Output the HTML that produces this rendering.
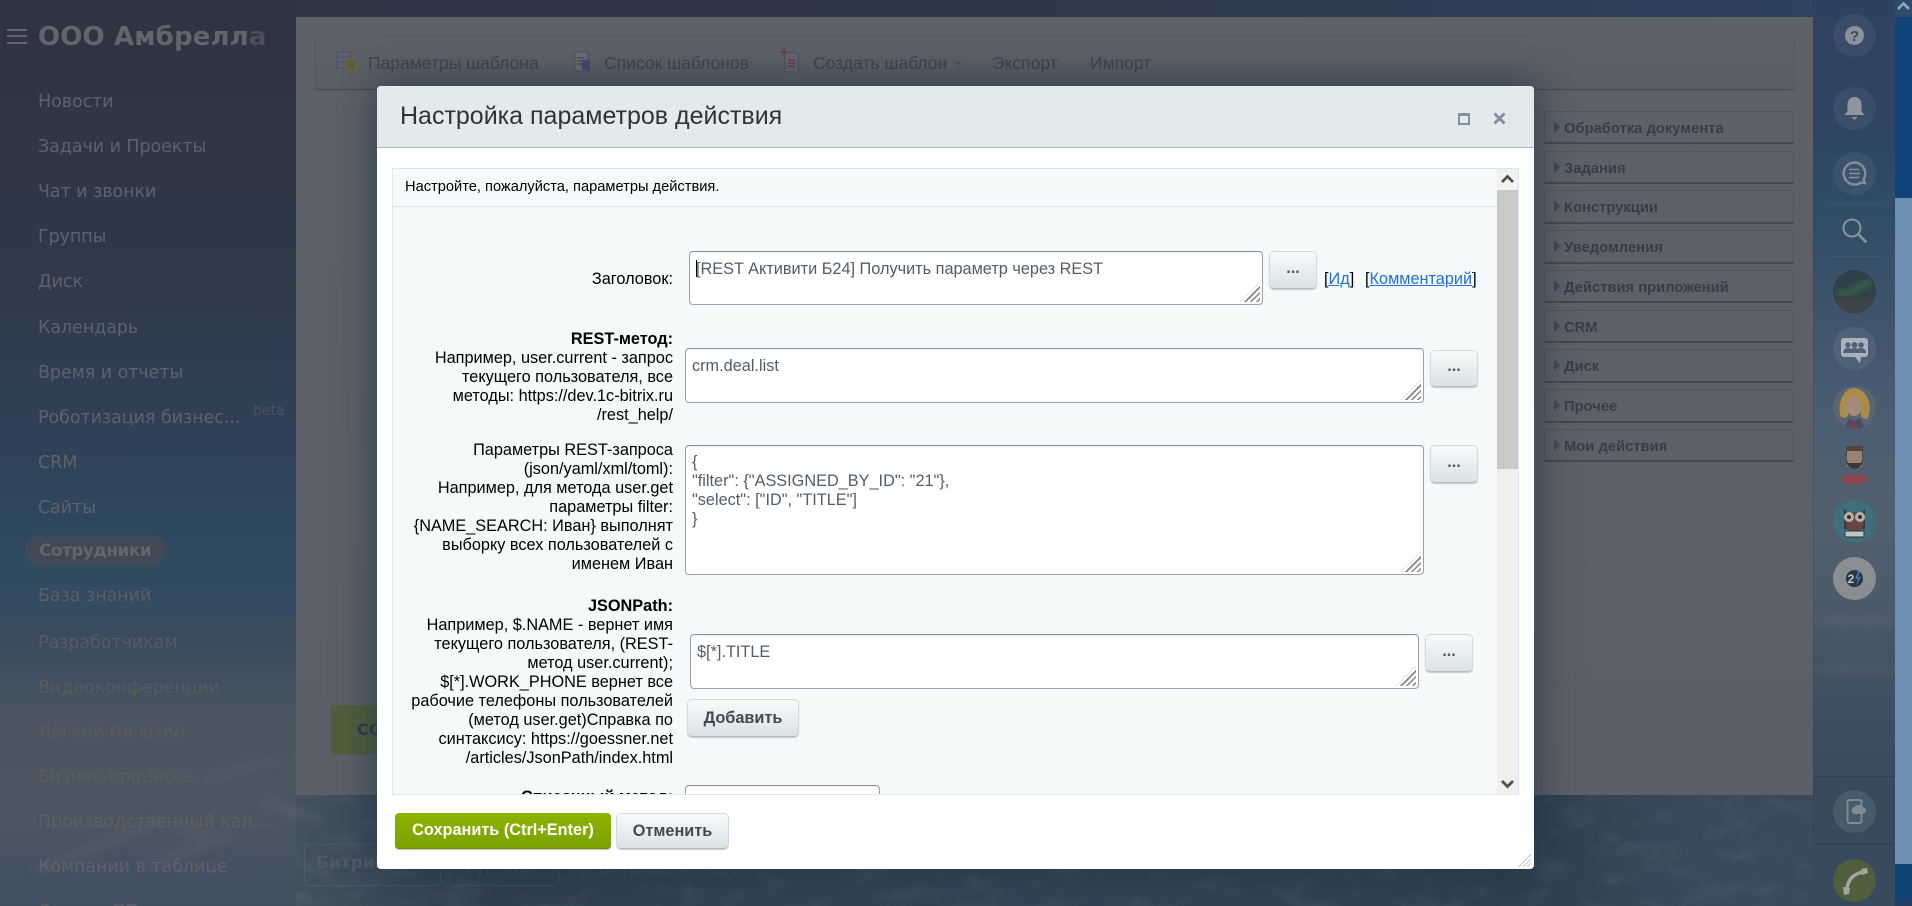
<!DOCTYPE html>
<html lang="ru"><head><meta charset="utf-8"><title>Настройка параметров действия</title>
<style>
html,body{margin:0;padding:0;width:1912px;height:906px;overflow:hidden;background:#33445a}
*{box-sizing:border-box}
body{font-family:"Liberation Sans",Arial,sans-serif;position:relative}
.a{position:absolute}
.t{position:absolute;white-space:nowrap}
.nav{position:absolute;left:38px;white-space:nowrap;font-family:"DejaVu Sans",sans-serif;font-size:17.4px;line-height:24px;height:24px}
.pi{position:absolute;left:1544px;width:250px;height:33px;border:1px solid rgba(60,65,75,.35);border-bottom:2px solid rgba(50,55,65,.55);font:bold 14.75px/34px "Liberation Sans",sans-serif;color:#383d4c;padding-left:19px;border-radius:1px}
.pi:before{content:"";position:absolute;left:9px;top:9px;border-left:6px solid #444a57;border-top:6px solid transparent;border-bottom:6px solid transparent}
.c{position:absolute;left:1833px;width:43px;height:43px;border-radius:50%;background:rgba(255,255,255,.055)}
.c svg,.av svg{position:absolute;left:0;top:0}
.av{position:absolute;left:1833px;width:43px;height:43px;border-radius:50%;overflow:hidden}
.lab{position:absolute;left:373px;width:300px;text-align:right;font-size:16.3px;line-height:19px;color:#000;white-space:nowrap}
.ta{position:absolute;background:#fff;border:1px solid #9aa1ad;border-top-color:#8a92a0;border-radius:4px;box-shadow:inset 0 1px 1px rgba(0,0,0,.06);font-size:16.3px;line-height:19px;color:#535c69;padding:4px 6px;white-space:pre}
.ta:after{content:"";position:absolute;right:2px;bottom:2px;width:20px;height:20px;background:repeating-linear-gradient(135deg,#858585 0 1.6px,transparent 1.6px 4.2px);clip-path:polygon(100% 0,100% 100%,0 100%)}
.btn{position:absolute;border-radius:5px;background:linear-gradient(#f6fafa,#dbe3e5);border:1px solid #d3dadd;border-bottom-color:#b5bdc2;box-shadow:0 1px 1px rgba(0,0,0,.2);text-align:center;font-weight:bold;font-size:16.3px;color:#535c69}
a{color:#2472d8;text-decoration:underline}
</style></head><body>

<!-- backdrop -->
<div class="a" style="left:0;top:0;width:1912px;height:906px;background:linear-gradient(90deg,#2f3545 0,#2f3849 1000px,#2f4360 1895px)"></div>
<div class="a" style="left:0;top:0;width:296px;height:906px;background:linear-gradient(180deg,#2f3443 0,#2f3645 150px,#2f3a4c 300px,#2f4258 450px,#2f4a60 560px,#3a4c5e 640px,#4a5561 720px,#4b5663 820px,#414f5f 906px)"></div>
<div class="a" style="left:1813px;top:0;width:82px;height:906px;background:linear-gradient(180deg,#2f4160 0,#2f4562 130px,#304c66 210px,#3f546a 310px,#4d5e72 430px,#52606e 520px,#4a5868 620px,#3e5062 700px,#384a5c 790px,#384b5c 906px);border-left:1px solid rgba(40,50,65,.25)"></div>
<div class="a" style="left:296px;top:795px;width:1517px;height:111px;background:linear-gradient(90deg,#44525f 0,#3c4a58 80px,#303f4e 180px,#334556 700px,#2f4050 1240px,#384a5c 1400px,#384a5c 100%)"></div>

<!-- clouds -->
<svg class="a" style="left:0;top:0" width="1912" height="906">
<defs>
<filter id="b1" x="-30%" y="-100%" width="160%" height="300%"><feGaussianBlur stdDeviation="5"/></filter>
<filter id="cl" x="0" y="0" width="100%" height="100%"><feTurbulence type="fractalNoise" baseFrequency=".025 .05" numOctaves="4" seed="8"/><feColorMatrix values="0 0 0 0 .55  0 0 0 0 .58  0 0 0 0 .62  1.8 0 0 0 -.82"/></filter>
</defs>
<g filter="url(#b1)" fill="#6a7079" opacity=".3">
<ellipse cx="100" cy="845" rx="75" ry="5" transform="rotate(-22 100 845)"/>
<ellipse cx="190" cy="850" rx="50" ry="5" transform="rotate(-20 190 850)"/>
<ellipse cx="200" cy="835" rx="30" ry="5" transform="rotate(18 200 835)"/>
<ellipse cx="290" cy="810" rx="35" ry="6" transform="rotate(18 290 810)"/>
<ellipse cx="240" cy="770" rx="45" ry="4" transform="rotate(-15 240 770)"/>
<ellipse cx="1855" cy="620" rx="45" ry="7"/>
<ellipse cx="1855" cy="670" rx="45" ry="5"/>
</g>
<rect x="296" y="795" width="1517" height="111" filter="url(#cl)" opacity=".1"/>
</svg>

<!-- sidebar -->
<div class="a" style="left:7px;top:29px;width:20px;height:2px;background:#62656e;box-shadow:0 6px 0 #62656e,0 13px 0 #62656e"></div>
<div class="t" style="left:38px;top:19px;font:bold 26px/36px 'DejaVu Sans',sans-serif;letter-spacing:.15px;color:#62656e">ООО Амбрелл<span style="color:#4b4f5b">а</span></div>
<div class="nav" style="top:90px;color:#5e616b">Новости</div>
<div class="nav" style="top:135px;color:#5e616b">Задачи и Проекты</div>
<div class="nav" style="top:180px;color:#5e616b">Чат и звонки</div>
<div class="nav" style="top:225px;color:#5e616b">Группы</div>
<div class="nav" style="top:270px;color:#5e616b">Диск</div>
<div class="nav" style="top:316px;color:#5e616b">Календарь</div>
<div class="nav" style="top:361px;color:#5e616b">Время и отчеты</div>
<div class="nav" style="top:406px;color:#5e616b">Роботизация бизнес...</div>
<div class="t" style="left:253px;top:402px;font:14px/18px 'DejaVu Sans',sans-serif;color:#4a5264">beta</div>
<div class="nav" style="top:451px;color:#5e616b">CRM</div>
<div class="nav" style="top:496px;color:#5e616b">Сайты</div>
<div class="a" style="left:25px;top:535px;width:141px;height:31px;border-radius:16px;background:#3f4a56"></div>
<div class="nav" style="top:539px;left:39px;font-size:17px;color:#62656c;font-weight:bold;letter-spacing:-.6px">Сотрудники</div>
<div class="nav" style="top:584px;color:#5a5e67">База знаний</div>
<div class="nav" style="top:631px;color:#595b63">Разработчикам</div>
<div class="nav" style="top:676px;color:#585a60">Видеоконференции</div>
<div class="nav" style="top:720px;color:#595a5f">Легкий магазин</div>
<div class="nav" style="top:765px;color:#5a5c62">Бизнес-процессы</div>
<div class="nav" style="top:810px;color:#5e6067">Производственный кал...</div>
<div class="nav" style="top:855px;color:#5f6269">Компании в таблице</div>
<div class="nav" style="top:900px;color:#5a5e67">Отчеты ПП</div>

<!-- footer of page behind dialog -->
<div class="a" style="left:304px;top:844px;width:137px;height:42px;border:1px solid rgba(110,120,130,.3);border-radius:5px"></div>
<div class="a" style="left:449px;top:844px;width:110px;height:42px;border:1px solid rgba(110,120,130,.25);border-radius:5px"></div>
<div class="t" style="left:316px;top:852px;font:bold 17px/22px 'DejaVu Sans',sans-serif;color:#535a64">Битрикс24</div>
<div class="t" style="left:466px;top:858px;font:16px/22px 'DejaVu Sans',sans-serif;color:#3f4e5d">Русский</div>
<div class="t" style="left:578px;top:858px;font:16px/22px 'DejaVu Sans',sans-serif;color:#3f4e5d">© Битрикс24, 2021</div>

<!-- main panel -->
<div class="a" style="left:296px;top:17px;width:1517px;height:778px;background:linear-gradient(#5f6169,#5c5f68)"></div>
<div class="a" style="left:316px;top:37px;width:1478px;height:52px;border-radius:3px;background:linear-gradient(#5f6168,#5a5e66);box-shadow:0 1px 1px rgba(40,45,55,.5),0 0 1px rgba(40,45,55,.35)"></div>
<svg class="a" style="left:336px;top:50px" width="22" height="24"><rect x="1" y="2" width="14" height="16" fill="#5f6371" stroke="#4c5268"/><path d="M1 7h14M1 12h14" stroke="#4c5268"/><circle cx="15" cy="15" r="5.5" fill="#5d5c3a" stroke="#66653a" stroke-width="2"/></svg>
<div class="t" style="left:368px;top:52px;font-size:17.5px;line-height:22px;color:#3f4350">Параметры шаблона</div>
<svg class="a" style="left:572px;top:50px" width="20" height="24"><rect x="3" y="2" width="13" height="19" fill="#6a6c75" stroke="#4c5060"/><path d="M5 8h7M5 11h7M5 14h7" stroke="#6c4042" stroke-width="1.5"/><rect x="10" y="10" width="8" height="10" fill="#414a70"/></svg>
<div class="t" style="left:604px;top:52px;font-size:17.5px;line-height:22px;color:#3f4350">Список шаблонов</div>
<svg class="a" style="left:778px;top:46px" width="22" height="28"><path d="M6 2v8M2 6h8" stroke="#74383a" stroke-width="1.5"/><rect x="7" y="7" width="13" height="19" fill="#646670" stroke="#4c5060"/><path d="M10 14h7M10 17h7M10 20h7" stroke="#74383a" stroke-width="1.5"/></svg>
<div class="t" style="left:813px;top:52px;font-size:17.5px;line-height:22px;color:#3f4350">Создать шаблон</div>
<div class="a" style="left:954px;top:62px;border-top:3px solid #4c505c;border-left:4px solid transparent;border-right:4px solid transparent"></div>
<div class="t" style="left:992px;top:52px;font-size:17.5px;line-height:22px;color:#3f4350">Экспорт</div>
<div class="t" style="left:1090px;top:52px;font-size:17.5px;line-height:22px;color:#3f4350">Импорт</div>

<div class="pi" style="top:111px">Обработка документа</div>
<div class="pi" style="top:151px">Задания</div>
<div class="pi" style="top:190px;height:34px">Конструкции</div>
<div class="pi" style="top:230px;height:34px">Уведомления</div>
<div class="pi" style="top:270px">Действия приложений</div>
<div class="pi" style="top:310px">CRM</div>
<div class="pi" style="top:349px;height:34px">Диск</div>
<div class="pi" style="top:389px;height:34px">Прочее</div>
<div class="pi" style="top:429px;height:33px">Мои действия</div>

<div class="a" style="left:1586px;top:525px;width:35px;height:10px;background:#62625f;opacity:.4"></div>
<div class="a" style="left:1586px;top:540px;width:35px;height:10px;background:#62625f;opacity:.4"></div>
<div class="a" style="left:1586px;top:556px;width:170px;height:12px;background:#636361;opacity:.35"></div>
<div class="a" style="left:1586px;top:572px;width:125px;height:10px;background:#636361;opacity:.35"></div>
<div class="a" style="left:1586px;top:600px;width:205px;height:10px;background:#636361;opacity:.3"></div>
<div class="a" style="left:1586px;top:618px;width:90px;height:14px;background:#636361;opacity:.3"></div>
<div class="a" style="left:1544px;top:687px;width:250px;height:1px;border-top:1px dotted #565a5e"></div>

<div class="a" style="left:331px;top:705px;width:60px;height:49px;background:#505f3c;border-radius:2px"></div>
<div class="t" style="left:357px;top:718px;font:bold 16px/24px 'DejaVu Sans',sans-serif;color:#2f3a4c">СО</div>

<!-- right column -->
<div class="a" style="left:1828px;top:204px;width:55px;height:1px;background:rgba(255,255,255,.05)"></div>
<div class="a" style="left:1828px;top:256px;width:55px;height:1px;background:rgba(255,255,255,.05)"></div>
<div class="a" style="left:1814px;top:776px;width:81px;height:1px;background:rgba(20,30,45,.18)"></div>
<div class="a" style="left:1814px;top:843px;width:81px;height:1px;background:rgba(20,30,45,.18)"></div>

<div class="c" style="top:14px"><svg width="43" height="43"><circle cx="21.5" cy="21.5" r="9.5" fill="#8b909a"/><text x="21.5" y="27" text-anchor="middle" font-family="Liberation Sans" font-weight="bold" font-size="15" fill="#3c4a62">?</text></svg></div>
<div class="c" style="top:87px"><svg width="43" height="43"><path d="M21.5 10c-5 0-7 4-7 8v6l-3 4h20l-3-4v-6c0-4-2-8-7-8z" fill="#8f949d"/><path d="M18.5 30h6l-3 3z" fill="#8f949d"/></svg></div>
<div class="c" style="top:152px"><svg width="43" height="43"><path d="M21.5 10.5a11 11 0 1 0 6.5 20l4 .5-1.500-3.500a11 11 0 0 0-9-17z" fill="none" stroke="#868d98" stroke-width="2.400"/><path d="M16 17.500h10M16 21.500h11M16 25.500h10" stroke="#868d98" stroke-width="1.500"/></svg></div>
<svg class="a" style="left:1840px;top:216px" width="30" height="30"><circle cx="12" cy="12" r="8.500" fill="none" stroke="#8b929c" stroke-width="2"/><path d="M18 18l8.500 8.500" stroke="#8b929c" stroke-width="2.600"/></svg>

<div class="av" style="top:270px;background:#33424a"><svg width="43" height="43"><defs><filter id="g"><feGaussianBlur stdDeviation="3"/></filter></defs><rect width="43" height="43" fill="#2f4049"/><rect y="27" width="43" height="16" fill="#3d4448"/><path d="M3 24C14 26 26 18 38 10" stroke="#35644a" stroke-width="6" fill="none" filter="url(#g)"/></svg></div>
<div class="av" style="top:327px;background:#4f6279"><svg width="43" height="43"><path d="M11 11h21a3 3 0 0 1 3 3v13a3 3 0 0 1-3 3h-4l-1 6-5-6H11a3 3 0 0 1-3-3V14a3 3 0 0 1 3-3z" fill="#adb1b8"/><circle cx="15" cy="18" r="2.800" fill="#4f6279"/><circle cx="28" cy="18" r="2.800" fill="#4f6279"/><circle cx="21.500" cy="18" r="3" fill="#4f6279"/><path d="M10 26c0-4 3-5 5-5s5 1 5 5zM23 26c0-4 3-5 5-5s5 1 5 5zM16 26c0-4 3-5 5.500-5s5.500 1 5.500 5z" fill="#4f6279"/></svg></div>
<div class="av" style="top:386px;background:#5b6470"><svg width="43" height="43"><path d="M8 32C3 16 12 2 21 2s20 12 14 30c-2 2-6 0-7-2l-1-14c-5 0-9-1-11-3l-1 16c-1 3-5 4-7 1z" fill="#a98c48"/><ellipse cx="21" cy="20" rx="8" ry="10" fill="#a58a7a"/><path d="M11 43l5-11 5 3 6-3 5 11z" fill="#484d6a"/><path d="M20 35l3 0 1 8h-5z" fill="#8a3a46"/></svg></div>
<div class="av" style="top:442px;background:transparent"><svg width="43" height="43"><path d="M13 4h17v10H13z" fill="#4e4540"/><rect x="14" y="9" width="15" height="16" fill="#9a8270"/><path d="M13 17c0 13 17 13 17 0l-2 4H15z" fill="#3d3735"/><path d="M4 43c2-8 10-11 18-11s16 3 18 11z" fill="#8a4650"/></svg></div>
<div class="av" style="top:500px;background:#3f6e7c"><svg width="43" height="43"><path d="M11 9l4 4h13l4-4v20H11z" fill="#383a42"/><ellipse cx="21.500" cy="22" rx="9" ry="10" fill="#6d4342"/><circle cx="16" cy="17" r="5" fill="#b2b3b0"/><circle cx="27" cy="17" r="5" fill="#b2b3b0"/><circle cx="16" cy="17" r="2" fill="#333"/><circle cx="27" cy="17" r="2" fill="#333"/><rect x="12" y="31" width="19" height="6" rx="1" fill="#bcc4c4" stroke="#333"/></svg></div>
<div class="av" style="top:557px;background:#8a8d92"><svg width="43" height="43"><circle cx="21.500" cy="21.500" r="8.500" fill="#2a3644"/><text x="18" y="26" text-anchor="middle" font-family="Liberation Sans" font-weight="bold" font-size="12" fill="#bfc3c8">2</text><path d="M25 14l-3 8h3l-2 7 5-9h-3l2-6z" fill="#2f7ea0"/></svg></div>
<div class="av" style="top:790px;background:#475c6a"><svg width="43" height="43"><rect x="14.500" y="10" width="14" height="23" rx="2" fill="none" stroke="#7f8a92" stroke-width="2"/><path d="M22 24a3.500 3.500 0 0 1 0-7c1-3 6-3 7 0a3.500 3.500 0 0 1 1 7z" fill="#7f8a92"/></svg></div>
<div class="av" style="top:859px;left:1833px;background:#4f5f3d"><svg width="43" height="43"><path d="M14 31C14 21 21 14 31 13" fill="none" stroke="#a3a69f" stroke-width="3.500"/><path d="M10 28l7 1-1 6-5 1zM28 10l6-1 1 5-6 2z" fill="#a3a69f"/></svg></div>

<!-- right strip -->
<div class="a" style="left:1895px;top:0;width:17px;height:906px;background:#6e8fb4"></div>
<div class="a" style="left:1895px;top:0;width:17px;height:17px;background:#2e4a6c"></div>
<div class="a" style="left:1895px;top:17px;width:17px;height:181px;background:#0f4379"></div>
<div class="a" style="left:1895px;top:864px;width:17px;height:35px;background:#0e4175"></div>
<div class="a" style="left:1895px;top:899px;width:17px;height:7px;background:#223f63"></div>
<svg class="a" style="left:1895px;top:0" width="17" height="17"><path d="M3 9l5.500-5.500L14 9" stroke="#93a7bd" stroke-width="2.600" fill="none"/></svg>

<!-- dialog -->
<div class="a" style="left:377px;top:86px;width:1157px;height:783px;background:#fff;border-radius:4px;box-shadow:0 0 38px 6px rgba(25,50,65,.55)"></div>
<div class="a" style="left:377px;top:86px;width:1157px;height:62px;background:#e3eaec;border-radius:4px 4px 0 0;border-bottom:1px solid #b4b8ba"></div>
<div class="t" style="left:400px;top:101px;font-size:25px;line-height:30px;color:#2f3338">Настройка параметров действия</div>
<div class="a" style="left:1458px;top:113px;width:12px;height:12px;border:2px solid #838fa2;border-top-width:3px"></div>
<svg class="a" style="left:1493px;top:112px" width="13" height="13"><path d="M1.500 1.500l10 10M11.500 1.500l-10 10" stroke="#7f8ba0" stroke-width="2.800"/></svg>

<!-- content box -->
<div class="a" style="left:392px;top:168px;width:1127px;height:627px;border:1px solid #dce7ed;background:#f5f9fa;overflow:hidden">
  <div class="a" style="left:0;top:0;width:1104px;height:38px;border-bottom:1px solid #dde7ec"></div>
  <div class="a" style="left:1104px;top:0;width:22px;height:626px;background:#efefef"></div>
  <div class="a" style="left:1104px;top:0;width:22px;height:21px;background:#f2f2f2"></div>
  <div class="a" style="left:1104px;top:21px;width:21px;height:279px;background:#c9c9c9"></div>
</div>
<svg class="a" style="left:1497px;top:169px" width="21" height="21"><path d="M5 13l5.500-5.500L16 13" stroke="#505050" stroke-width="2.800" fill="none"/></svg>
<svg class="a" style="left:1497px;top:774px" width="21" height="21"><path d="M5 7l5.500 5.500L16 7" stroke="#505050" stroke-width="2.800" fill="none"/></svg>

<div class="t" style="left:405px;top:179px;font-size:14.65px;line-height:17px;color:#000">Настройте, пожалуйста, параметры действия.</div>

<div class="lab" style="top:270px">Заголовок:</div>
<div class="ta" style="left:689px;top:251px;width:574px;height:54px;padding:8px 6px">[REST Активити Б24] Получить параметр через REST</div>
<div class="a" style="left:696px;top:260px;width:1px;height:17px;background:#000"></div>
<div class="btn" style="left:1269px;top:251px;width:48px;height:38px;line-height:32px">...</div>
<div class="t" style="left:1324px;top:270px;font-size:16.3px;line-height:19px;color:#000">[<a>Ид</a>]</div>
<div class="t" style="left:1365px;top:270px;font-size:16.3px;line-height:19px;color:#000">[<a>Комментарий</a>]</div>

<div class="lab" style="top:330px"><b>REST-метод:</b><br>Например, user.current - запрос<br>текущего пользователя, все<br>методы: https://dev.1c-bitrix.ru<br>/rest_help/</div>
<div class="ta" style="left:685px;top:348px;width:739px;height:55px;padding:8px 6px">crm.deal.list</div>
<div class="btn" style="left:1430px;top:350px;width:48px;height:37px;line-height:31px">...</div>

<div class="lab" style="top:441px">Параметры REST-запроса<br>(json/yaml/xml/toml):<br>Например, для метода user.get<br>параметры filter:<br>{NAME_SEARCH: Иван} выполнят<br>выборку всех пользователей с<br>именем Иван</div>
<div class="ta" style="left:685px;top:445px;width:739px;height:130px;padding:7px 6px">{
"filter": {"ASSIGNED_BY_ID": "21"},
"select": ["ID", "TITLE"]
}</div>
<div class="btn" style="left:1430px;top:445px;width:48px;height:38px;line-height:32px">...</div>

<div class="lab" style="top:597px"><b>JSONPath:</b><br>Например, $.NAME - вернет имя<br>текущего пользователя, (REST-<br>метод user.current);<br>$[*].WORK_PHONE вернет все<br>рабочие телефоны пользователей<br>(метод user.get)Справка по<br>синтаксису: https://goessner.net<br>/articles/JsonPath/index.html</div>
<div class="ta" style="left:690px;top:634px;width:729px;height:55px;padding:8px 6px">$[*].TITLE</div>
<div class="btn" style="left:1425px;top:634px;width:48px;height:38px;line-height:32px">...</div>
<div class="btn" style="left:687px;top:699px;width:112px;height:38px;line-height:36px;color:#434951">Добавить</div>

<div class="a" style="left:393px;top:780px;width:1103px;height:14px;overflow:hidden">
  <div class="lab" style="left:-20px;top:8px"><b>Списочный метод:</b></div>
  <div class="ta" style="left:292px;top:5px;width:195px;height:40px"></div>
</div>

<!-- footer -->
<div class="a" style="left:395px;top:813px;width:216px;height:36px;border-radius:4px;background:linear-gradient(#8fb300,#79a200);border-bottom:1px solid #6a8c00;box-shadow:0 1px 1px rgba(0,0,0,.25);color:#fff;font-weight:bold;font-size:16.3px;line-height:34px;text-align:center">Сохранить (Ctrl+Enter)</div>
<div class="btn" style="left:616px;top:813px;width:113px;height:36px;line-height:34px;color:#434951">Отменить</div>
<div class="a" style="left:1516px;top:852px;width:15px;height:15px;background:repeating-linear-gradient(135deg,#c8c8c8 0 1px,transparent 1px 3px);clip-path:polygon(100% 0,100% 100%,0 100%)"></div>

</body></html>
